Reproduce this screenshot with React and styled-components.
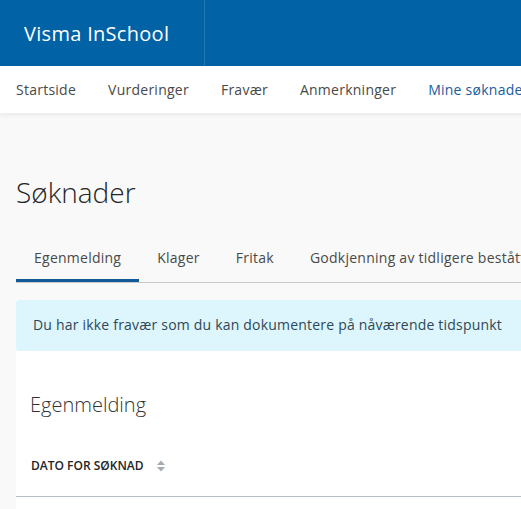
import React from "react";
import styled, { createGlobalStyle } from "styled-components";

const Global = createGlobalStyle`
  html, body { margin: 0; padding: 0; overflow: hidden; }
  body {
    background: #f9f9f9;
    font-family: "Open Sans", "Noto Sans", sans-serif;
    color: #494949;
  }
`;

const Page = styled.div`
  width: 900px;
  min-height: 509px;
`;

const Header = styled.header`
  height: 66px;
  background: #0162a6;
  display: flex;
  align-items: stretch;
`;

const Brand = styled.div`
  width: 180px;
  padding-left: 24px;
  border-right: 1px solid rgba(255, 255, 255, 0.14);
  display: flex;
  align-items: center;
  color: #fff;
  font-size: 20px;
  letter-spacing: 0.3px;
  font-weight: 400;
  white-space: nowrap;
`;

const Nav = styled.nav`
  height: 47px;
  background: #fff;
  display: flex;
  align-items: center;
  box-shadow: 0 2px 5px rgba(0, 0, 0, 0.07);
  position: relative;
`;

const NavItem = styled.a`
  padding: 0 16px;
  font-size: 14px;
  line-height: 20px;
  letter-spacing: 0.25px;
  white-space: nowrap;
  color: ${(p) => (p.$active ? "#1b5b9e" : "#494949")};
  font-weight: ${(p) => (p.$active ? 500 : 400)};
`;

const Main = styled.main`
  padding-left: 16px;
`;

const Title = styled.h1`
  margin: 61px 0 0;
  font-size: 28px;
  line-height: 36px;
  font-weight: 300;
  color: #252525;
`;

const Tabs = styled.div`
  margin-top: 26px;
  display: flex;
  border-bottom: 1px solid #c9c9c9;
`;

const Tab = styled.div`
  padding: 12px 18px 11px;
  font-size: 14px;
  line-height: 20px;
  letter-spacing: 0.25px;
  white-space: nowrap;
  color: #494949;
  border-bottom: 3px solid ${(p) => (p.$active ? "#0f5a97" : "transparent")};
`;

const Card = styled.section`
  margin-top: 17px;
  background: #fff;
  min-height: 300px;
`;

const Alert = styled.div`
  background: #ddf6fd;
  border-radius: 3px;
  padding: 15px 17px 16px;
  font-size: 14px;
  line-height: 20px;
  letter-spacing: 0.2px;
  color: #2e4856;
  white-space: nowrap;
`;

const SectionTitle = styled.h2`
  margin: 40px 0 0 14px;
  font-size: 20px;
  line-height: 28px;
  font-weight: 300;
  color: #333;
`;

const TableHead = styled.div`
  margin-top: 29px;
  height: 49px;
  padding-left: 15px;
  display: flex;
  align-items: center;
  gap: 12px;
  border-bottom: 1px solid #b5bdc5;
  box-sizing: border-box;
  padding-bottom: 13px;
`;

const ColLabel = styled.span`
  font-size: 12px;
  font-weight: 600;
  text-transform: uppercase;
  color: #252525;
`;

const SortIcon = () => (
  <svg width="10" height="12" viewBox="0 0 10 12">
    <path d="M5 0.5 L9 5 L1 5 Z" fill="#a3abb3" />
    <path d="M5 11.5 L9 7 L1 7 Z" fill="#a3abb3" />
  </svg>
);

export default function App() {
  return (
    <Page>
      <Global />
      <Header>
        <Brand>Visma InSchool</Brand>
      </Header>
      <Nav>
        <NavItem>Startside</NavItem>
        <NavItem>Vurderinger</NavItem>
        <NavItem>Fravær</NavItem>
        <NavItem>Anmerkninger</NavItem>
        <NavItem $active>Mine søknader</NavItem>
      </Nav>
      <Main>
        <Title>Søknader</Title>
        <Tabs>
          <Tab $active>Egenmelding</Tab>
          <Tab>Klager</Tab>
          <Tab>Fritak</Tab>
          <Tab>Godkjenning av tidligere beståtte fag</Tab>
        </Tabs>
        <Card>
          <Alert>Du har ikke fravær som du kan dokumentere på nåværende tidspunkt</Alert>
          <SectionTitle>Egenmelding</SectionTitle>
          <TableHead>
            <ColLabel>Dato for søknad</ColLabel>
            <SortIcon />
          </TableHead>
        </Card>
      </Main>
    </Page>
  );
}
